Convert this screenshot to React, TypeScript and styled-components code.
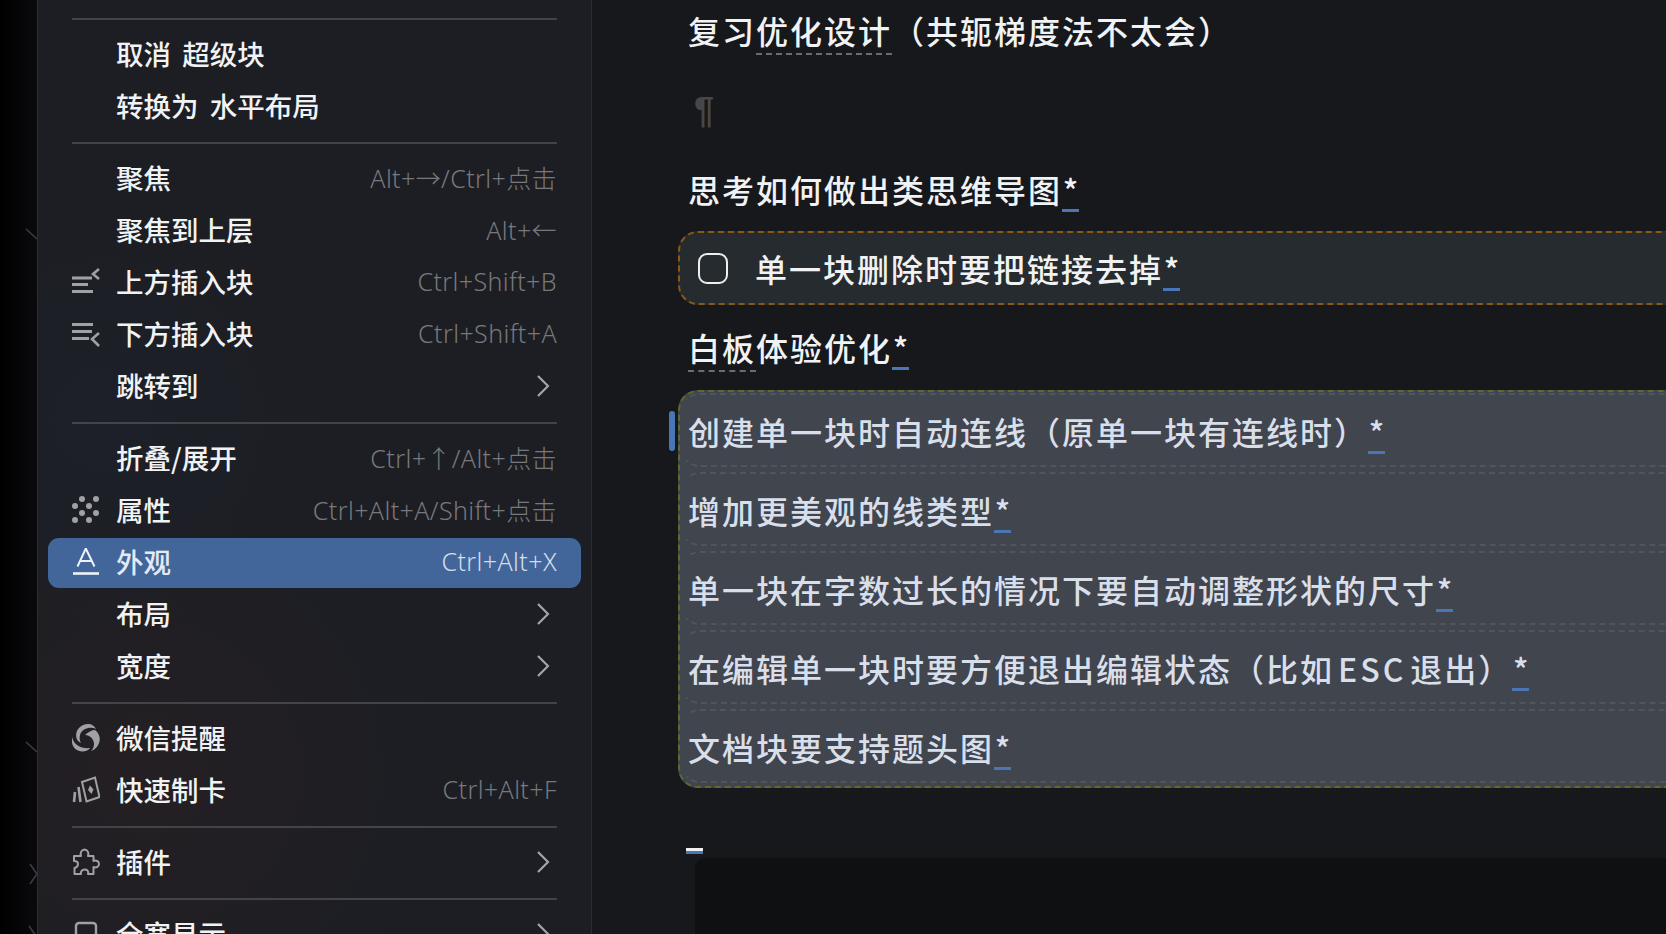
import React from "react";
import styled, { createGlobalStyle } from "styled-components";

const GlobalStyle = createGlobalStyle`
	html, body {
		margin: 0;
		padding: 0;
		height: 100%;
		background: #16181c;
		overflow: hidden;
	}
	#root {
		height: 100%;
	}
`;

const cjk = `"Noto Sans CJK SC", "Noto Sans", sans-serif`;

const Page = styled.div`
	display: flex;
	width: 1666px;
	height: 934px;
	overflow: hidden;
	font-family: ${cjk};
`;

const Rail = styled.div`
	position: relative;
	flex: 0 0 37px;
	background: linear-gradient(90deg, #000000 0%, #0a0a0d 100%);
`;

const RailCaret = styled.svg<{ $top: number; $left: number }>`
	position: absolute;
	top: ${(p) => p.$top}px;
	left: ${(p) => p.$left}px;
	width: 12px;
	height: 22px;
	fill: none;
	stroke: #3c3d40;
	stroke-width: 1.6;
`;

const Menu = styled.div`
	flex: 0 0 555px;
	box-sizing: border-box;
	padding: 8px 10px 0;
	border-left: 1px solid #2d2e33;
	border-right: 1px solid #2a2c30;
	background:
		radial-gradient(circle at 20% 83%, rgba(58, 34, 38, 0.28) 0, rgba(58, 34, 38, 0) 32%),
		radial-gradient(circle at 12% 45%, rgba(30, 40, 62, 0.2) 0, rgba(30, 40, 62, 0) 30%),
		#1c1e23;
`;

const Separator = styled.div`
	height: 2px;
	margin: 10px 24px;
	background: #434449;
`;

const Row = styled.div<{ $active?: boolean }>`
	display: flex;
	align-items: center;
	box-sizing: border-box;
	height: 50px;
	margin-bottom: 2px;
	padding: 0 24px;
	border-radius: 11px;
	background: ${(p) => (p.$active ? "#42669a" : "transparent")};
	color: ${(p) => (p.$active ? "#e4eaf4" : "#f1f2f4")};
`;

const IconSlot = styled.span<{ $active?: boolean }>`
	display: flex;
	flex: 0 0 28px;
	height: 28px;
	margin: -2px 16px 0 0;
	color: ${(p) => (p.$active ? "#eef2f8" : "#a0a1a4")};

	svg {
		width: 28px;
		height: 28px;
	}
`;

const Label = styled.span`
	flex: 1;
	margin-top: -5px;
	font-size: 27.5px;
	font-weight: 500;
	line-height: 50px;
	word-spacing: 5px;
	white-space: pre;
`;

const Shortcut = styled.span<{ $active?: boolean }>`
	margin-top: -4px;
	font-family: "Noto Sans", "Noto Sans CJK SC", sans-serif;
	font-size: 25px;
	font-weight: 300;
	letter-spacing: 0.4px;
	white-space: pre;
	color: ${(p) => (p.$active ? "#d3dcea" : "#77787c")};
`;

const Caret = styled.svg`
	width: 14px;
	height: 24px;
	margin: -2px 7px 0 0;
	fill: none;
	stroke: #a3a4a7;
	stroke-width: 2.2;
`;

const Editor = styled.div`
	position: relative;
	flex: 1;
	min-width: 0;
	padding: 5px 0 0 86px;
	background: #16181c;
`;

const Line = styled.div<{ $gap: number }>`
	height: 50px;
	margin-bottom: ${(p) => p.$gap}px;
	margin-left: 10px;
	font-size: 32px;
	font-weight: 500;
	line-height: 50px;
	letter-spacing: 2px;
	color: #f1f2f4;
	white-space: pre;
`;

const Pilcrow = styled(Line)`
	color: #45474b;
	font-family: "Liberation Sans", sans-serif;
	font-size: 36px;
	font-weight: 700;
	margin-left: 16px;
`;

const Ref = styled.span`
	border-bottom: 2px dashed #6a6c70;
`;

const Mark = styled.span`
	display: inline-block;
	height: 45px;
	line-height: 50px;
	border-bottom: 3px solid #4a76b6;
	letter-spacing: 0;
	width: 17px;
	text-align: center;
`;

const Latin = styled.span`
	margin: 0 4px;
	letter-spacing: 3px;
`;

const TaskBlock = styled.div`
	display: flex;
	align-items: center;
	box-sizing: border-box;
	height: 74px;
	margin: 0 -2px 17px 0;
	padding: 0 0 3px 18px;
	border: 2px dashed #8a5a14;
	border-right: none;
	border-radius: 20px 0 0 20px;
	background: #262b2f;
	font-size: 32px;
	font-weight: 500;
	letter-spacing: 2px;
	color: #f1f2f4;
	white-space: pre;
`;

const Checkbox = styled.span`
	box-sizing: border-box;
	flex: 0 0 30px;
	height: 31px;
	margin: 3px 27px 0 0;
	border: 2px solid #eceef0;
	border-radius: 9px;
`;

const SuperBlock = styled.div`
	display: flex;
	flex-direction: column;
	gap: 5px;
	box-sizing: border-box;
	height: 398px;
	margin-bottom: 60px;
	padding-top: 1px;
	border: 2px dashed #5e6a2b;
	border-right: none;
	border-radius: 20px 0 0 20px;
	background: #41454e;
`;

const SuperRow = styled.div`
	box-sizing: border-box;
	height: 74px;
	padding-left: 6px;
	border: 2px dashed #50545c;
	border-right: none;
	border-left-color: transparent;
	border-radius: 20px 0 0 20px;
	font-size: 32px;
	font-weight: 500;
	line-height: 72px;
	letter-spacing: 2px;
	color: #d8dfeb;
	white-space: pre;
`;

const GutterBar = styled.div`
	position: absolute;
	top: 411px;
	left: 77px;
	width: 6px;
	height: 40px;
	border-radius: 3px;
	background: #4a76b6;
`;

const CursorMark = styled.div`
	box-sizing: content-box;
	width: 17px;
	height: 3px;
	margin-left: 8px;
	background: #4a76b6;
	border-top: 3px solid #eef0f2;
`;

const CodeBlock = styled.div`
	height: 120px;
	margin: 4px 0 0 17px;
	border-radius: 10px 0 0 0;
	background: #0f1011;
`;

const Chevron = () => (
	<Caret viewBox="0 0 14 24">
		<path d="M2 2 L12 12 L2 22" />
	</Caret>
);

const InsertAboveIcon = () => (
	<svg viewBox="0 0 28 28" fill="none" stroke="currentColor" strokeWidth="3">
		<path d="M0 10.5 H20 M0 17 H16 M0 24 H21" transform="translate(0 -0.5)" />
		<path d="M27 1 L21 6 L27 11" strokeWidth="2.6" />
	</svg>
);

const InsertBelowIcon = () => (
	<svg viewBox="0 0 28 28" fill="none" stroke="currentColor" strokeWidth="3">
		<path d="M0 4.5 H21 M0 11.5 H20 M0 18.5 H17" />
		<path d="M27 13 L20 19 L27 26" strokeWidth="2.6" />
	</svg>
);

const AttrIcon = () => (
	<svg viewBox="0 0 28 28" fill="currentColor">
		{[
			[10, 3],
			[24, 3],
			[17, 10],
			[3, 10],
			[10, 17],
			[24, 17],
			[3, 24],
			[17, 24],
		].map(([cx, cy]) => (
			<circle key={`${cx}-${cy}`} cx={cx} cy={cy} r="3" />
		))}
	</svg>
);

const AppearanceIcon = () => (
	<svg viewBox="0 0 28 28" fill="none" stroke="currentColor">
		<path d="M5.5 18.5 L13.8 0.5 L22.5 18.5 M8.2 13 H19.8" strokeWidth="2" />
		<path d="M1 25.5 H27" strokeWidth="2.6" />
	</svg>
);

const WechatIcon = () => (
	<svg viewBox="0 0 28 28" fill="currentColor">
		<path d="M16 0 C20 0 22.5 2 24 5 C19 2.5 10 4 8 11 C7 14.5 8 17 9 19 C4.5 17 3 12 5 7 C7 3 11 0 16 0 Z" />
		<path d="M23 6 C27 9 29 14 27 19 C25.5 23.5 22 26 19 27 C22 24 23 20 21 16 C19 12 15 11 13 11 C16 8 20 6 23 6 Z" />
		<path d="M0 13 C-1 19 1 24.5 6 26.5 C11 28.5 16 27 18 24 C14 24.5 9 24 5 21 C2 19 1 16 0 13 Z" />
	</svg>
);

const CardIcon = () => (
	<svg viewBox="0 0 28 28" fill="none" stroke="currentColor" strokeWidth="2">
		<path d="M10 6 L23 1.5 L27.5 21 L14.5 25.5 Z" />
		<path d="M18 9.5 L21.5 13.5 L19.5 18 L16 14 Z" fill="currentColor" stroke="none" />
		<path d="M6.5 11 L8.5 26 M3 16 L2 26" strokeWidth="2.6" />
	</svg>
);

const PluginIcon = () => (
	<svg viewBox="0 0 28 28" fill="none" stroke="currentColor" strokeWidth="2" strokeLinejoin="round">
		<path d="M2 8 H9 C8 5 9 2 12.5 1.5 C16 2 17 5 16 8 H21.5 V13 C24 12 27 13 27 16 C27 19 24 20 21.5 19 V26 H16 C17 23 15 21.5 12.5 21.5 C10 21.5 8.5 23.5 9 26 H2.5 V20 C5 19.5 6 18 6 16 C6 14 4 13 2 13 Z" />
	</svg>
);

const SquareIcon = () => (
	<svg viewBox="0 0 28 28" fill="none" stroke="currentColor" strokeWidth="2.4">
		<rect x="4" y="3" width="20" height="22" rx="3" />
	</svg>
);

type MenuEntry =
	| "sep"
	| {
			label: string;
			icon?: React.ReactNode;
			shortcut?: string;
			more?: boolean;
			active?: boolean;
	  };

const entries: MenuEntry[] = [
	"sep",
	{ label: "取消 超级块" },
	{ label: "转换为 水平布局" },
	"sep",
	{ label: "聚焦", shortcut: "Alt+→/Ctrl+点击" },
	{ label: "聚焦到上层", shortcut: "Alt+←" },
	{ label: "上方插入块", icon: <InsertAboveIcon />, shortcut: "Ctrl+Shift+B" },
	{ label: "下方插入块", icon: <InsertBelowIcon />, shortcut: "Ctrl+Shift+A" },
	{ label: "跳转到", more: true },
	"sep",
	{ label: "折叠/展开", shortcut: "Ctrl+↑/Alt+点击" },
	{ label: "属性", icon: <AttrIcon />, shortcut: "Ctrl+Alt+A/Shift+点击" },
	{ label: "外观", icon: <AppearanceIcon />, shortcut: "Ctrl+Alt+X", active: true },
	{ label: "布局", more: true },
	{ label: "宽度", more: true },
	"sep",
	{ label: "微信提醒", icon: <WechatIcon /> },
	{ label: "快速制卡", icon: <CardIcon />, shortcut: "Ctrl+Alt+F" },
	"sep",
	{ label: "插件", icon: <PluginIcon />, more: true },
	"sep",
	{ label: "全宽显示", icon: <SquareIcon />, more: true },
];

const superRows: React.ReactNode[] = [
	"创建单一块时自动连线（原单一块有连线时）",
	"增加更美观的线类型",
	"单一块在字数过长的情况下要自动调整形状的尺寸",
	<>
		在编辑单一块时要方便退出编辑状态（比如<Latin>ESC</Latin>退出）
	</>,
	"文档块要支持题头图",
];

export default function App() {
	return (
		<Page>
			<GlobalStyle />
			<Rail>
				<RailCaret $top={227} $left={25} viewBox="0 0 12 22">
					<path d="M1 2 L12 12" />
				</RailCaret>
				<RailCaret $top={740} $left={25} viewBox="0 0 12 22">
					<path d="M1 2 L12 12" />
				</RailCaret>
				<RailCaret $top={863} $left={29} viewBox="0 0 12 22">
					<path d="M1 1 L8 11 L1 21" />
				</RailCaret>
				<RailCaret $top={925} $left={28} viewBox="0 0 12 22">
					<path d="M1 1 L8 11" />
				</RailCaret>
			</Rail>
			<Menu>
				{entries.map((entry, i) =>
					entry === "sep" ? (
						<Separator key={i} />
					) : (
						<Row key={i} $active={entry.active}>
							<IconSlot $active={entry.active}>{entry.icon}</IconSlot>
							<Label>{entry.label}</Label>
							{entry.shortcut && (
								<Shortcut $active={entry.active}>{entry.shortcut}</Shortcut>
							)}
							{entry.more && <Chevron />}
						</Row>
					),
				)}
			</Menu>
			<Editor>
				<GutterBar />
				<Line $gap={31}>
					复习<Ref>优化设计</Ref>（共轭梯度法不太会）
				</Line>
				<Pilcrow $gap={28}>¶</Pilcrow>
				<Line $gap={17}>
					思考如何做出类思维导图<Mark>*</Mark>
				</Line>
				<TaskBlock>
					<Checkbox />
					<span>
						单一块删除时要把链接去掉<Mark>*</Mark>
					</span>
				</TaskBlock>
				<Line $gap={18}>
					<Ref>白板</Ref>体验优化<Mark>*</Mark>
				</Line>
				<SuperBlock>
					{superRows.map((text, i) => (
						<SuperRow key={i}>
							{text}
							<Mark>*</Mark>
						</SuperRow>
					))}
				</SuperBlock>
				<CursorMark />
				<CodeBlock />
			</Editor>
		</Page>
	);
}
